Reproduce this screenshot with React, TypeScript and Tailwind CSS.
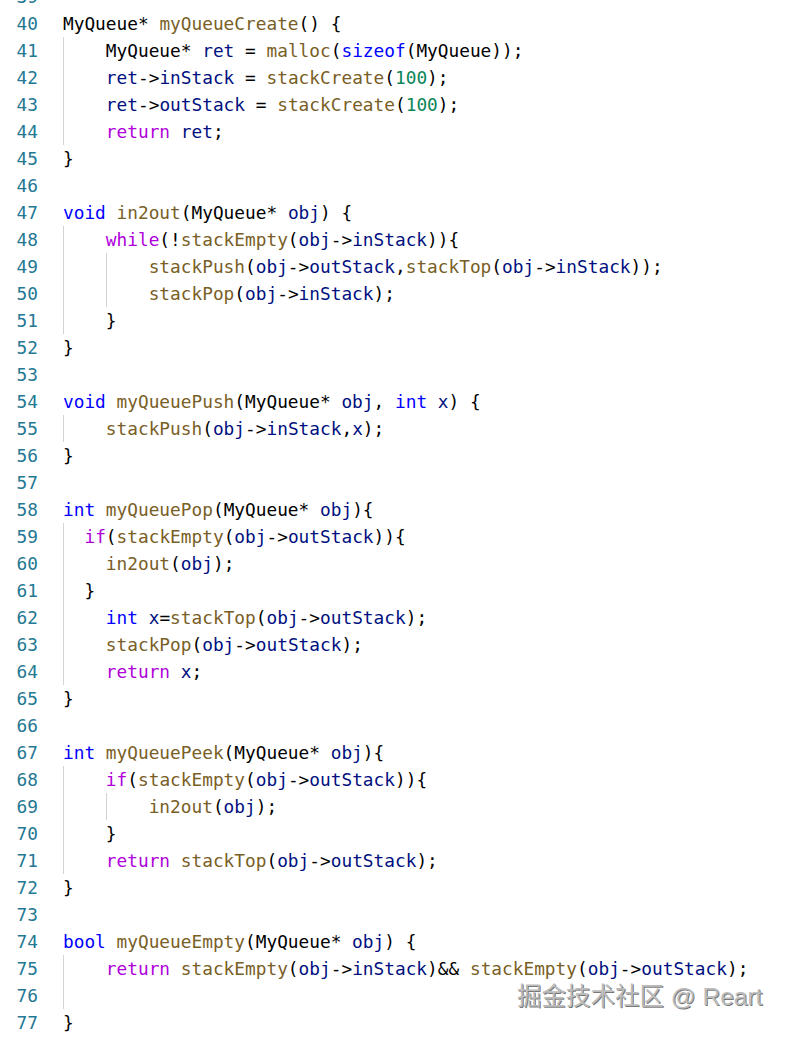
import React from "react";

const lines: { n: number; code: string; guides: number[] }[] = [
  { n: 39, code: "", guides: [] },
  { n: 40, code: "MyQueue* myQueueCreate() {", guides: [] },
  { n: 41, code: "    MyQueue* ret = malloc(sizeof(MyQueue));", guides: [0] },
  { n: 42, code: "    ret->inStack = stackCreate(100);", guides: [0] },
  { n: 43, code: "    ret->outStack = stackCreate(100);", guides: [0] },
  { n: 44, code: "    return ret;", guides: [0] },
  { n: 45, code: "}", guides: [] },
  { n: 46, code: "", guides: [] },
  { n: 47, code: "void in2out(MyQueue* obj) {", guides: [] },
  { n: 48, code: "    while(!stackEmpty(obj->inStack)){", guides: [0] },
  { n: 49, code: "        stackPush(obj->outStack,stackTop(obj->inStack));", guides: [0, 4] },
  { n: 50, code: "        stackPop(obj->inStack);", guides: [0, 4] },
  { n: 51, code: "    }", guides: [0] },
  { n: 52, code: "}", guides: [] },
  { n: 53, code: "", guides: [] },
  { n: 54, code: "void myQueuePush(MyQueue* obj, int x) {", guides: [] },
  { n: 55, code: "    stackPush(obj->inStack,x);", guides: [0] },
  { n: 56, code: "}", guides: [] },
  { n: 57, code: "", guides: [] },
  { n: 58, code: "int myQueuePop(MyQueue* obj){", guides: [] },
  { n: 59, code: "  if(stackEmpty(obj->outStack)){", guides: [0] },
  { n: 60, code: "    in2out(obj);", guides: [0] },
  { n: 61, code: "  }", guides: [0] },
  { n: 62, code: "    int x=stackTop(obj->outStack);", guides: [0] },
  { n: 63, code: "    stackPop(obj->outStack);", guides: [0] },
  { n: 64, code: "    return x;", guides: [0] },
  { n: 65, code: "}", guides: [] },
  { n: 66, code: "", guides: [] },
  { n: 67, code: "int myQueuePeek(MyQueue* obj){", guides: [] },
  { n: 68, code: "    if(stackEmpty(obj->outStack)){", guides: [0] },
  { n: 69, code: "        in2out(obj);", guides: [0, 4] },
  { n: 70, code: "    }", guides: [0] },
  { n: 71, code: "    return stackTop(obj->outStack);", guides: [0] },
  { n: 72, code: "}", guides: [] },
  { n: 73, code: "", guides: [] },
  { n: 74, code: "bool myQueueEmpty(MyQueue* obj) {", guides: [] },
  { n: 75, code: "    return stackEmpty(obj->inStack)&& stackEmpty(obj->outStack);", guides: [0] },
  { n: 76, code: "", guides: [0] },
  { n: 77, code: "}", guides: [] },
];

const KW = new Set(["void", "int", "bool", "sizeof"]);
const CTRL = new Set(["while", "if", "return"]);

const CLS = {
  kw: "text-[#0000ff]",
  ctrl: "text-[#af00db]",
  fn: "text-[#795e26]",
  num: "text-[#098658]",
  type: "text-[#000000]",
  var: "text-[#001080]",
  punct: "text-[#000000]",
};

function tokenize(code: string): { t: string; c: string }[] {
  const out: { t: string; c: string }[] = [];
  const re = /([A-Za-z_][A-Za-z0-9_]*)|(\d+)|(\s+)|(.)/g;
  let m: RegExpExecArray | null;
  while ((m = re.exec(code))) {
    if (m[1]) {
      const w = m[1];
      const next = code[re.lastIndex];
      let c = CLS.var;
      if (KW.has(w)) c = CLS.kw;
      else if (CTRL.has(w)) c = CLS.ctrl;
      else if (w === "MyQueue") c = CLS.type;
      else if (next === "(") c = CLS.fn;
      out.push({ t: w, c });
    } else if (m[2]) {
      out.push({ t: m[2], c: CLS.num });
    } else if (m[3]) {
      out.push({ t: m[3], c: "" });
    } else {
      out.push({ t: m[4], c: CLS.punct });
    }
  }
  return out;
}

export default function App() {
  return (
    <div className="relative w-[793px] h-[1037px] overflow-hidden bg-white">
      <div
        className="-mt-[17px] text-[17.8px]"
        style={{ fontFamily: '"DejaVu Sans Mono", "Liberation Mono", monospace' }}
      >
        {lines.map((l) => (
          <div key={l.n} className="flex h-[27px] items-center leading-[27px]">
            <div className="w-[38px] shrink-0 text-right text-[#237893]">{l.n}</div>
            <div className="relative ml-[25px] h-full flex-1 whitespace-pre">
              {l.guides.map((g) => (
                <div
                  key={g}
                  className={
                    g === 0
                      ? "absolute top-0 bottom-0 left-0 w-px bg-[#d3d3d3]"
                      : "absolute top-0 bottom-0 left-[43px] w-px bg-[#d3d3d3]"
                  }
                />
              ))}
              {tokenize(l.code).map((tk, i) => (
                <span key={i} className={tk.c}>
                  {tk.t}
                </span>
              ))}
            </div>
          </div>
        ))}
      </div>
      <div
        className="absolute left-[517px] top-[981px] text-[24.5px] leading-[32px] text-[#bcbcbc] [text-shadow:1px_1px_0_rgba(0,0,0,0.55)]"
        style={{ fontFamily: '"Liberation Sans", "Noto Sans CJK SC", sans-serif' }}
      >
        掘金技术社区 @ Reart
      </div>
    </div>
  );
}
